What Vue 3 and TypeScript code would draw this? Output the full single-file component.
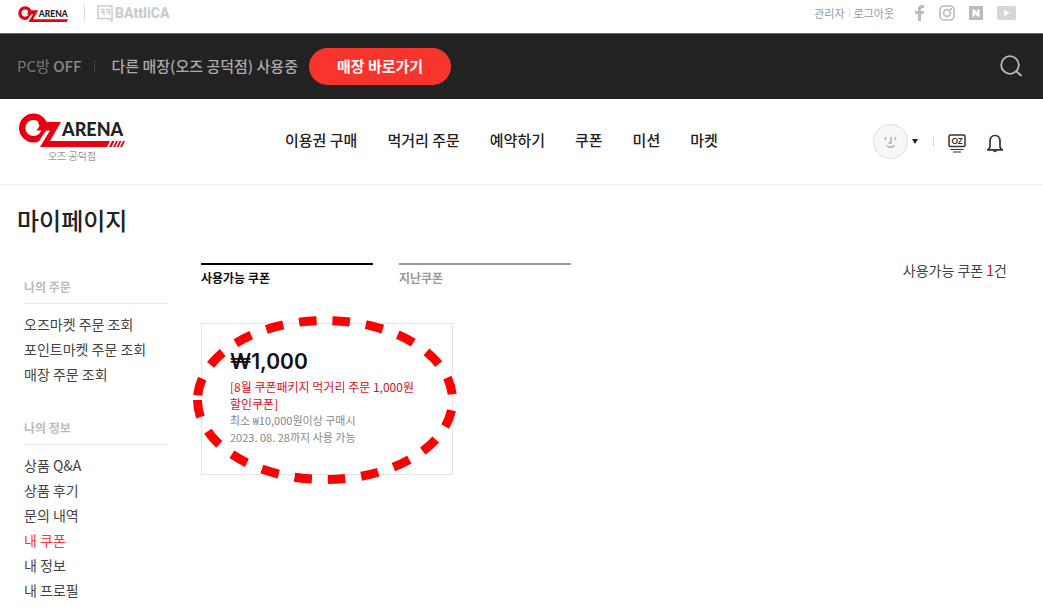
<script setup lang="ts">
interface MenuItem {
  label: string
  active?: boolean
}
interface MenuGroup {
  title: string
  items: MenuItem[]
}

const navItems: string[] = ['이용권 구매', '먹거리 주문', '예약하기', '쿠폰', '미션', '마켓']

const groups: MenuGroup[] = [
  {
    title: '나의 주문',
    items: [{ label: '오즈마켓 주문 조회' }, { label: '포인트마켓 주문 조회' }, { label: '매장 주문 조회' }],
  },
  {
    title: '나의 정보',
    items: [
      { label: '상품 Q&A' },
      { label: '상품 후기' },
      { label: '문의 내역' },
      { label: '내 쿠폰', active: true },
      { label: '내 정보' },
      { label: '내 프로필' },
    ],
  },
]
</script>

<template>
  <div class="page">
    <div class="topbar">
      <a href="#" class="brand-small" aria-label="OZ ARENA">
        <svg width="51" height="17" viewBox="0 0 108 36">
          <circle cx="15" cy="15" r="11" fill="none" stroke="#e60012" stroke-width="7" />
          <path d="M30 18L19 35" stroke="#fff" stroke-width="4" />
          <path d="M20 9H43L32 28H106L103 34H22L32 17.500H18.500L21.500 13Z" fill="#e60012" />
          <text x="44" y="24" class="arena-text">ARENA</text>
        </svg>
      </a>
      <span class="top-divider"></span>
      <a href="#" class="battlica">
        <svg width="16" height="17" viewBox="0 0 16 17" fill="none" stroke="#ccc">
          <path d="M1 1H15V16L12 13.500H1Z" stroke-width="1.500" />
          <path d="M3.500 4.500H7V10M3.500 7H7M9 4.500H12.500V10M9 7H12.500" stroke-width="1.300" />
        </svg>
        <span>BAttliCA</span>
      </a>
      <div class="top-links">
        <a href="#">관리자</a>
        <span class="mini-divider"></span>
        <a href="#">로그아웃</a>
      </div>
      <div class="social">
        <a href="#" aria-label="Facebook">
          <svg width="10" height="16" viewBox="0 0 10 16"><path d="M3 16V9H0V6H3V4Q3 0 7 0H9V3H7.500Q6 3 6 4.500V6H9L8.500 9H6V16Z" fill="#bbb" /></svg>
        </a>
        <a href="#" aria-label="Instagram">
          <svg width="16" height="16" viewBox="0 0 16 16" fill="none" stroke="#bbb" stroke-width="1.600">
            <rect x="1" y="1" width="14" height="14" rx="4" /><circle cx="8" cy="8" r="3.400" /><circle cx="12" cy="4" r=".4" />
          </svg>
        </a>
        <a href="#" aria-label="Naver">
          <svg width="14" height="14" viewBox="0 0 14 14"><rect width="14" height="14" fill="#bbb" /><path d="M3.500 10.500V3.500H5.800L8.200 7V3.500H10.500V10.500H8.200L5.800 7V10.500Z" fill="#fff" /></svg>
        </a>
        <a href="#" aria-label="YouTube">
          <svg width="19" height="14" viewBox="0 0 19 14"><rect width="19" height="14" rx="2" fill="#d6d6d6" /><path d="M7 4L13 7L7 10Z" fill="#fff" /></svg>
        </a>
      </div>
    </div>

    <div class="storebar">
      <span class="pc-state">PC방 <b>OFF</b></span>
      <span class="store-divider"></span>
      <span class="store-name">다른 매장(오즈 공덕점) 사용중</span>
      <button type="button" class="go-store">매장 바로가기</button>
      <button type="button" class="search" aria-label="검색">
        <svg width="24" height="24" viewBox="0 0 24 24" fill="none" stroke="#bbb" stroke-width="1.800">
          <circle cx="11" cy="11" r="8.800" /><path d="M17 17L22.500 22" />
        </svg>
      </button>
    </div>

    <header class="header">
      <a href="#" class="brand">
        <svg width="108" height="36" viewBox="0 0 108 36" aria-label="OZ ARENA">
          <circle cx="15.500" cy="15" r="11.300" fill="none" stroke="#e60012" stroke-width="6.400" />
          <path d="M30 18L19 35" stroke="#fff" stroke-width="4" />
          <path d="M20 9H43L32 28H92L89 34H22L32 17.500H18.500L21.500 13Z" fill="#e60012" />
          <path d="M94 28H96.500L93.500 34H91ZM98 28H100L97 34H95ZM101.500 28H103.500L100.500 34H98.500ZM105 28H107L104 34H102Z" fill="#e60012" />
          <text x="44" y="23" class="arena-text">ARENA</text>
        </svg>
        <span class="branch">오즈 공덕점</span>
      </a>
      <nav class="nav" aria-label="주 메뉴">
        <a v-for="item in navItems" :key="item" href="#">{{ item }}</a>
      </nav>
      <div class="tools">
        <button type="button" class="profile" aria-label="프로필">
          <svg width="35" height="35" viewBox="0 0 35 35" fill="none">
            <circle cx="17.500" cy="17.500" r="17" fill="#f7f7f7" stroke="#ddd" />
            <path d="M12.500 13V16M22.500 13V16M18 13V19H15.500M13.500 21.500Q17.500 25 21.500 21.500" stroke="#aaa" stroke-width="1.400" />
          </svg>
          <svg width="6" height="5" viewBox="0 0 6 5"><path d="M0 0H6L3 5Z" fill="#222" /></svg>
        </button>
        <span class="tool-divider"></span>
        <button type="button" class="tool screen" aria-label="OZ PC">
          <svg width="18" height="19" viewBox="0 0 18 19" fill="none" stroke="#333">
            <rect x="1" y="1" width="16" height="11.500" rx="1.500" stroke-width="1.500" />
            <path d="M2.500 15.500H15.500M5 18H13" stroke-width="1.200" />
            <text x="9" y="9.500" text-anchor="middle" class="oz-text">OZ</text>
          </svg>
        </button>
        <button type="button" class="tool" aria-label="알림">
          <svg width="18" height="19" viewBox="0 0 18 19" fill="none" stroke="#333" stroke-width="1.700">
            <path d="M1 15.800H17M2.500 15.500L4 13V7.500C4 3.500 6 1.500 9 1.500S14 3.500 14 7.500V13L15.500 15.500" />
            <path d="M6.500 16.500Q9 20 11.500 16.500Z" fill="#333" stroke="none" />
          </svg>
        </button>
      </div>
    </header>

    <main class="main">
      <h1>마이페이지</h1>
      <div class="columns">
        <aside class="sidebar">
          <section v-for="group in groups" :key="group.title">
            <h2>{{ group.title }}</h2>
            <ul>
              <li v-for="item in group.items" :key="item.label">
                <a href="#" :class="{ active: item.active }">{{ item.label }}</a>
              </li>
            </ul>
          </section>
        </aside>
        <div class="content">
          <div class="tab-row">
            <div class="tabs">
              <button type="button" class="tab selected">사용가능 쿠폰</button>
              <button type="button" class="tab">지난쿠폰</button>
            </div>
            <p class="count">사용가능 쿠폰 <em>1</em>건</p>
          </div>
          <article class="coupon">
            <strong>₩1,000</strong>
            <p class="coupon-name">[8월 쿠폰패키지 먹거리 주문 1,000원<br />할인쿠폰]</p>
            <p>최소 ₩10,000원이상 구매시</p>
            <p>2023. 08. 28까지 사용 가능</p>
            <svg class="marker" width="264" height="168" viewBox="0 0 264 168" aria-hidden="true">
              <path d="M4.500 84A127.500 79.500 0 0 0 259.500 84A127.500 79.500 0 0 0 4.500 84" />
            </svg>
          </article>
        </div>
      </div>
    </main>
  </div>
</template>

<style>
body {
  margin: 0;
  background: #fff;
}
</style>

<style scoped>
.page {
  font-family: 'Noto Sans CJK KR', 'Noto Sans', sans-serif;
  color: #222;
}
a {
  color: inherit;
  text-decoration: none;
}
button {
  font: inherit;
  border: 0;
  padding: 0;
  background: none;
  cursor: pointer;
}
svg {
  display: block;
}
h1, h2, p, ul {
  margin: 0;
  padding: 0;
}
ul {
  list-style: none;
}
.topbar {
  display: flex;
  align-items: center;
  box-sizing: border-box;
  height: 33px;
  padding: 0 27px 7px 18px;
}
.brand-small {
  padding-top: 3px;
}
.arena-text {
  font: 900 18px 'Lato', sans-serif;
  fill: #222;
}
.top-divider {
  width: 1px;
  height: 16px;
  margin: 0 12px 0 15px;
  background: #ddd;
}
.battlica {
  display: flex;
  align-items: center;
  gap: 2px;
  font: 900 14px/16px Roboto, sans-serif;
  color: #ccc;
}
.top-links {
  display: flex;
  align-items: center;
  gap: 4px;
  margin-left: auto;
  font-size: 11px;
  color: #999;
}
.mini-divider {
  width: 1px;
  height: 8px;
  background: #ddd;
}
.social {
  display: flex;
  align-items: center;
  gap: 14px;
  margin-left: 21px;
}
.storebar {
  display: flex;
  align-items: center;
  box-sizing: border-box;
  height: 66px;
  padding: 0 20px 1px 17px;
  border-top: 1px solid #666;
  background: #222;
  color: #aaa;
  font-size: 15px;
  line-height: 20px;
  font-weight: 500;
}
.pc-state,
.store-name {
  padding-bottom: 1px;
}
.pc-state {
  color: #777;
  font-weight: 400;
}
.pc-state b {
  font-weight: 500;
  color: #888;
}
.store-divider {
  width: 1px;
  height: 12px;
  margin: 0 17px 0 12px;
  background: #444;
}
.go-store {
  height: 37px;
  margin-left: 11px;
  padding: 0 28px 1px;
  border-radius: 19px;
  background: #f8352c;
  color: #fff;
  font-weight: 700;
}
.search {
  margin-left: auto;
}
.header {
  display: grid;
  grid-template-columns: 267px 1fr auto;
  align-items: center;
  height: 85px;
  padding: 0 39px 0 18px;
  border-bottom: 1px solid #eee;
}
.brand {
  justify-self: start;
  padding-bottom: 7px;
}
.branch {
  display: block;
  text-align: center;
  font-size: 10px;
  line-height: 14px;
  color: #999;
}
.nav {
  display: flex;
  gap: 30px;
  padding-bottom: 5px;
  font-size: 15px;
  font-weight: 500;
  white-space: nowrap;
}
.tools {
  display: flex;
  align-items: center;
}
.profile {
  display: flex;
  align-items: center;
  gap: 4px;
}
.tool-divider {
  width: 1px;
  height: 11px;
  margin: 0 14px 0 15px;
  background: #ddd;
}
.tool {
  padding-top: 3px;
}
.screen {
  margin-right: 20px;
}
.oz-text {
  font: 900 8px 'Lato', sans-serif;
  fill: #333;
  stroke: none;
}
.main {
  padding: 17px 36px 0 17px;
}
h1 {
  font-size: 24px;
  line-height: 36px;
  font-weight: 500;
}
.columns {
  display: grid;
  grid-template-columns: 144px 1fr;
  gap: 33px;
  padding: 25px 0 0 7px;
}
.sidebar {
  padding-top: 15px;
}
.sidebar section + section {
  margin-top: 32px;
}
h2 {
  padding-bottom: 7px;
  border-bottom: 1px solid #eaeaea;
  color: #bbb;
  font-size: 12px;
  line-height: 18px;
  font-weight: 700;
}
.sidebar ul {
  padding-top: 8px;
}
li {
  font-size: 14px;
  line-height: 25px;
  color: #444;
}
li .active {
  color: #f8353f;
}
.tab-row {
  display: flex;
  justify-content: space-between;
  align-items: flex-start;
}
.tabs {
  display: flex;
  gap: 26px;
}
.tab {
  width: 172px;
  padding-top: 4px;
  border-top: 2px solid #999;
  text-align: left;
  color: #999;
  font-size: 12px;
  line-height: 18px;
  font-weight: 700;
}
.selected {
  border-color: #000;
  color: #111;
}
.count {
  font-size: 14px;
  line-height: 14px;
  color: #444;
}
.count em {
  font-style: normal;
  color: #e60012;
}
.coupon {
  position: relative;
  box-sizing: border-box;
  width: 252px;
  margin-top: 36px;
  padding: 24px 28px 28px;
  border: 1px solid #e5e5e5;
  color: #888;
  font-size: 11px;
  line-height: 17px;
  white-space: nowrap;
}
.coupon strong {
  display: block;
  margin-bottom: 2px;
  color: #111;
  font: 600 21px/28px 'Inter', sans-serif;
}
.coupon-name {
  font-size: 12px;
  color: #d8121f;
}
.marker {
  position: absolute;
  top: -8px;
  left: -9px;
  pointer-events: none;
}
.marker path {
  fill: none;
  stroke: #f00;
  stroke-width: 9;
  stroke-dasharray: 17.400 16.100;
}
</style>
